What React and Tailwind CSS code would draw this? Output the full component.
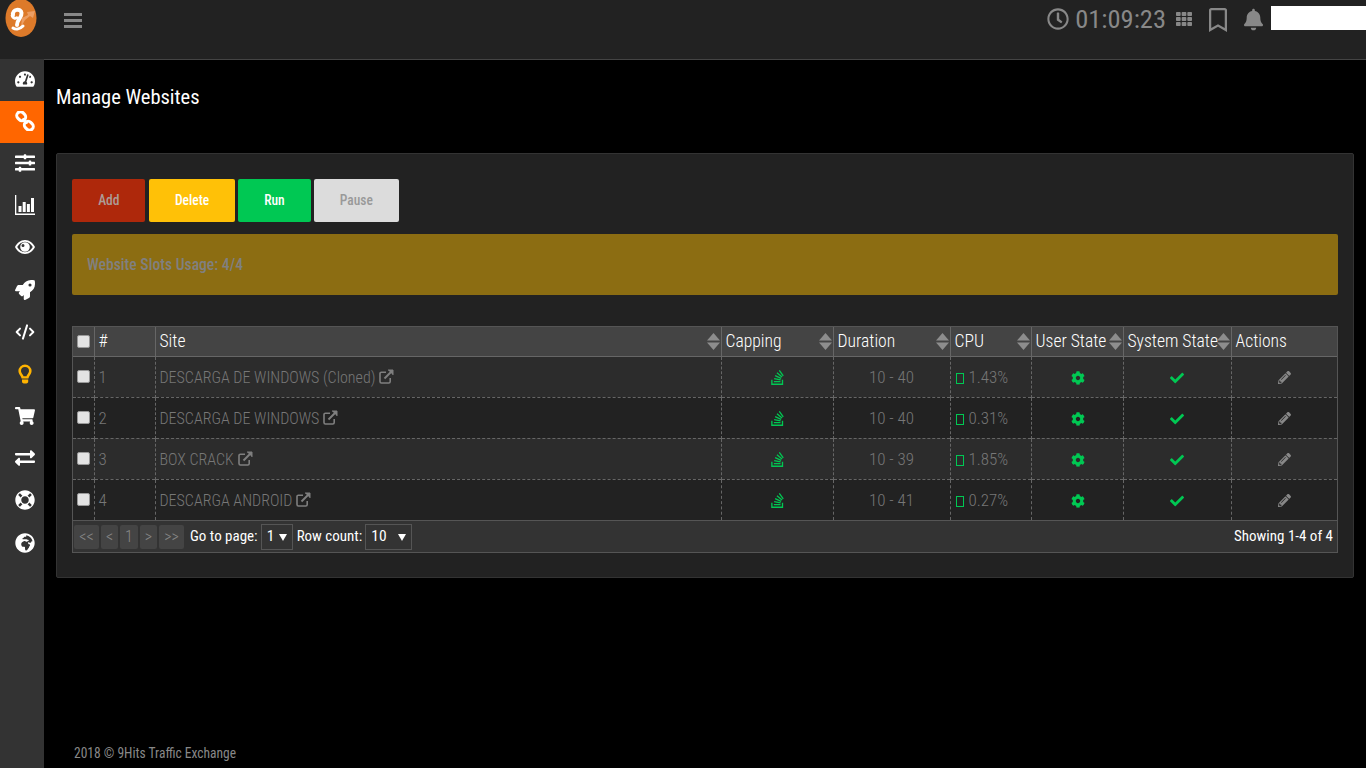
import React from "react";
import {
  FaTachometerAlt, FaSlidersH, FaRocket,
  FaShoppingCart, FaExchangeAlt, FaLifeRing, FaGlobeAfrica, FaRegClock, FaTh, FaRegBookmark, FaBell,
  FaStackOverflow, FaCog, FaCheck, FaPencilAlt,
} from "react-icons/fa";
import { CodeXml } from "lucide-react";

function ChainIcon({ className }) {
  return (
    <svg viewBox="0 0 20 20" fill="none" stroke="currentColor" strokeWidth="3" className={className}>
      <rect x="1.500" y="1.500" width="9.500" height="7.500" rx="3.700" transform="rotate(45 6.200 5.200)" />
      <rect x="9" y="11" width="9.500" height="7.500" rx="3.700" transform="rotate(45 13.800 14.800)" />
      <path d="M7.500 7.500l5 5" strokeWidth="2.400" />
    </svg>
  );
}

function BulbIcon({ className }) {
  return (
    <svg viewBox="0 0 20 20" className={className} fill="currentColor">
      <path fillRule="evenodd" d="M10 .5a6.600 6.600 0 0 0-6.600 6.600c0 2.400 1.500 3.700 2.400 5.300.5.8.7 1.600.8 2.200h6.800c.1-.6.3-1.400.8-2.200.9-1.600 2.400-2.900 2.400-5.300A6.600 6.600 0 0 0 10 .5Zm0 2.600a4 4 0 0 0-4 4c0 1.400.9 2.400 1.600 3.500.4.600.7 1.100.9 1.700h3c.2-.6.5-1.100.9-1.700.7-1.100 1.600-2.100 1.600-3.500a4 4 0 0 0-4-4Z" />
      <path d="M7 15.500h6.200v2.200c0 1-1 1.800-3.100 1.800S7 18.700 7 17.700Z" />
    </svg>
  );
}

function BarsIcon({ className }) {
  return (
    <svg viewBox="0 0 20 20" className={className} fill="currentColor">
      <path d="M0 0h1.300v18.500H20V20H0Z" />
      <path d="M3.500 11h3v6h-3ZM7.700 7h3v10h-3ZM11.900 9h3v8h-3ZM16 3h3v14h-3Z" />
    </svg>
  );
}

function EyeIcon({ className }) {
  return (
    <svg viewBox="0 0 20 20" className={className} fill="currentColor">
      <path fillRule="evenodd" d="M10 3C5.500 3 2 6.200 0 10c2 3.800 5.500 7 10 7s8-3.200 10-7c-2-3.800-5.500-7-10-7Zm0 1.800c3.400 0 6.100 2.300 7.800 5.200-1.700 2.900-4.400 5.200-7.800 5.200S3.900 12.900 2.200 10C3.900 7.100 6.600 4.800 10 4.800Z" />
      <path fillRule="evenodd" d="M10 5.200a4.800 4.800 0 1 0 0 9.600 4.800 4.800 0 0 0 0-9.600ZM8 7a1.500 1.500 0 1 1 0 3 1.500 1.500 0 0 1 0-3Z" />
    </svg>
  );
}

function CodeIcon({ className }) {
  return <CodeXml className={className} strokeWidth={2.4} />;
}

const nav = [
  [FaTachometerAlt, "text-white"], [ChainIcon, "text-white"], [FaSlidersH, "text-white"], [BarsIcon, "text-white"],
  [EyeIcon, "text-white"], [FaRocket, "text-white"], [CodeIcon, "text-white"], [BulbIcon, "text-[#ffb300]"],
  [FaShoppingCart, "text-white"], [FaExchangeAlt, "text-white"], [FaLifeRing, "text-white"], [FaGlobeAfrica, "text-white"],
];

const rows = [
  ["1", "DESCARGA DE WINDOWS (Cloned)", "10 - 40", "1.43%"],
  ["2", "DESCARGA DE WINDOWS", "10 - 40", "0.31%"],
  ["3", "BOX CRACK", "10 - 39", "1.85%"],
  ["4", "DESCARGA ANDROID", "10 - 41", "0.27%"],
];

function Logo() {
  return (
    <svg width="40" height="38" viewBox="0 0 40 38" className="block">
      <ellipse cx="21" cy="18" rx="15.500" ry="19" fill="#dd7a2a" />
      <path d="M21 27 L22 18 L28 15 L27 12 L35 11 L33 18 L30 16 L25 20 Z" fill="#eda26a" opacity="0.9" />
      <path d="M13 15 C12 9 21 8 21.500 13 C22 18 17 19 17 25" fill="none" stroke="#fff" strokeWidth="4" strokeLinecap="round" />
      <path d="M12 15 C13 19 16 19 18 17" fill="none" stroke="#fff" strokeWidth="3" />
      <path d="M13 28 C16 30 20 29 23 26" fill="none" stroke="#fff" strokeWidth="3" strokeLinecap="round" />
    </svg>
  );
}

function ExternalIcon() {
  return (
    <svg width="15" height="15" viewBox="0 0 15 15" fill="none" stroke="#7f7f7f" strokeWidth="1.600" className="mb-[4px] ml-[4px] inline-block align-middle">
      <path d="M7 3.200H2.400A1.400 1.400 0 0 0 1 4.600v8A1.400 1.400 0 0 0 2.400 14h7.400a1.400 1.400 0 0 0 1.400-1.400V9" />
      <path d="M5.500 9.500 13 2" strokeWidth="2" />
      <path d="M9 1h5v5" fill="#7f7f7f" strokeWidth="1" />
    </svg>
  );
}

function SortIcon() {
  return (
    <svg width="13" height="17" viewBox="0 0 13 17" fill="#8d8d8d" className="absolute right-[1px] top-[6px]">
      <path d="M6.500 0 13 7.500H0Z" />
      <path d="M6.500 17 13 9.500H0Z" />
    </svg>
  );
}

function Check() {
  return <span className="block h-[13px] w-[13px] rounded-[2px] border border-[#999] bg-[#e3e3e3]" />;
}

function Head({ children, sort }) {
  return (
    <th className="relative h-[29px] overflow-hidden whitespace-nowrap border-r border-[#666] px-[4px] py-0 text-left text-[17.600px] leading-[20px] font-[350] text-white last:border-r-0">
      {children}
      {sort && <SortIcon />}
    </th>
  );
}

function PageBtn({ children, w }) {
  return <span className={`flex h-[24px] items-center justify-center rounded-[2px] bg-[#444] text-[16px] font-light text-[#888] ${w}`}>{children}</span>;
}

function Select({ value, w }) {
  return (
    <span className={`flex h-[26px] items-center justify-between border border-[#555] pl-[5px] pr-[5px] text-[15.500px] text-white ${w}`}>
      {value}
      <svg width="8" height="8" viewBox="0 0 8 8" fill="#fff"><path d="M0 1h8L4 8Z" /></svg>
    </span>
  );
}

function ActionButton({ label, w, colors }) {
  return (
    <button className={`h-[43px] rounded-[2px] text-[15px] font-medium ${w} ${colors}`}>
      <span className="inline-block scale-x-90">{label}</span>
    </button>
  );
}

const cell = "border-r border-dashed border-[#666] pt-[2px]";

export default function App() {
  return (
    <div className="flex h-screen flex-col overflow-hidden bg-black font-['Roboto',sans-serif] [font-stretch:75%]">
      <header className="flex h-[60px] shrink-0 items-start border-b border-[#444] bg-[#222]">
        <div className="w-[44px] shrink-0"><Logo /></div>
        <div className="ml-[20px] mt-[13px] flex w-[18px] flex-col gap-[3.500px]">
          <span className="h-[2.500px] bg-[#888]" />
          <span className="h-[2.500px] bg-[#888]" />
          <span className="h-[2.500px] bg-[#888]" />
        </div>
        <div className="ml-auto flex items-start text-[#888]">
          <FaRegClock className="mt-[8px] h-[22px] w-[22px]" />
          <span className="ml-[6px] mt-[5px] text-[26.500px] leading-[28px]">01:09:23</span>
          <FaTh className="ml-[10px] mt-[11px] h-[16px] w-[16px]" />
          <FaRegBookmark className="ml-[17px] mt-[8px] h-[24px] w-[18px]" />
          <FaBell className="ml-[17px] mt-[7px] h-[25px] w-[19px]" />
          <span className="ml-[8px] mt-[6px] h-[24px] w-[95px] bg-white" />
        </div>
      </header>

      <div className="-mt-px flex min-h-0 flex-1">
        <nav className="w-[44px] shrink-0 bg-[#333]">
          {nav.map(([Icon, color], i) => (
            <div key={i} className={`flex h-[42.200px] w-full items-center justify-center pb-[3px] pl-[5px] ${i === 1 ? "bg-[#ff6600]" : ""} ${color}`}>
              <Icon className="h-[20px] w-[20px]" />
            </div>
          ))}
        </nav>

        <main className="flex min-w-0 flex-1 flex-col px-[12px]">
          <h1 className="mt-[26px] text-[20.500px] leading-[24px] font-normal text-white">Manage Websites</h1>

          <section className="mt-[44px] rounded-[2px] border border-[#333] bg-[#222] px-[15px] pb-[24px] pt-[25px]">
            <div className="flex gap-[3px]">
              <ActionButton label="Add" w="w-[73px]" colors="bg-[#ae280b] text-[#ad9c96]" />
              <span className="ml-[1px] flex"><ActionButton label="Delete" w="w-[86px]" colors="bg-[#ffc107] text-white" /></span>
              <ActionButton label="Run" w="w-[73px]" colors="bg-[#00c853] text-white" />
              <ActionButton label="Pause" w="w-[85px]" colors="bg-[#dcdcdc] text-[#999]" />
            </div>

            <div className="mt-[12px] flex h-[61px] items-center rounded-[2px] bg-[#8c6d12] px-[15px] text-[17px] font-medium text-[#808080]">
              <span className="inline-block origin-left scale-x-[.92]">Website Slots Usage: 4/4</span>
            </div>

            <div className="mt-[31px] border border-[#555]">
              <table className="w-full table-fixed border-collapse">
                <colgroup>
                  <col className="w-[21px]" />
                  <col className="w-[61px]" />
                  <col className="w-[566px]" />
                  <col className="w-[112px]" />
                  <col className="w-[117px]" />
                  <col className="w-[81px]" />
                  <col className="w-[92px]" />
                  <col className="w-[108px]" />
                  <col />
                </colgroup>
                <thead className="bg-[#444]">
                  <tr className="border-b border-[#666]">
                    <Head><Check /></Head>
                    <Head>#</Head>
                    <Head sort>Site</Head>
                    <Head sort>Capping</Head>
                    <Head sort>Duration</Head>
                    <Head sort>CPU</Head>
                    <Head sort>User State</Head>
                    <Head sort>System State</Head>
                    <Head>Actions</Head>
                  </tr>
                </thead>
                <tbody>
                  {rows.map((r, i) => (
                    <tr key={r[0]} className={`h-[41px] border-b border-dashed border-[#666] text-[17px] font-light text-[#777] last:border-b-0 ${i % 2 ? "bg-[#222]" : "bg-[#2c2c2c]"}`}>
                      <td className="border-r border-dashed border-[#666] px-[4px]"><Check /></td>
                      <td className={`${cell} px-[4px]`}>{r[0]}</td>
                      <td className={`${cell} whitespace-nowrap px-[4px] text-[16px]`}>{r[1]}<ExternalIcon /></td>
                      <td className={cell}><FaStackOverflow className="mx-auto h-[17px] w-[17px] text-[#00c853]" /></td>
                      <td className={`${cell} text-center`}>{r[2]}</td>
                      <td className={`${cell} whitespace-nowrap px-[5px]`}>
                        <span className="mr-[5px] inline-block h-[11px] w-[8px] border border-[#00c853] align-[-1px]" />{r[3]}
                      </td>
                      <td className={`${cell} pl-[2px]`}><FaCog className="mx-auto h-[14px] w-[14px] text-[#00c853]" /></td>
                      <td className={cell}><FaCheck className="mx-auto h-[14px] w-[14px] text-[#00c853]" /></td>
                      <td className="pt-[2px]"><FaPencilAlt className="mx-auto h-[13px] w-[13px] text-[#888]" /></td>
                    </tr>
                  ))}
                </tbody>
              </table>
              <div className="flex h-[32px] items-center border-t border-[#555] bg-[#333] pl-[1px] pr-[4px] text-[15px] text-white">
                <div className="flex gap-[2px]">
                  <PageBtn w="w-[25px]">&lt;&lt;</PageBtn>
                  <PageBtn w="w-[17px]">&lt;</PageBtn>
                  <PageBtn w="w-[18px]">1</PageBtn>
                  <PageBtn w="w-[17px]">&gt;</PageBtn>
                  <PageBtn w="w-[25px]">&gt;&gt;</PageBtn>
                </div>
                <span className="ml-[6px]">Go to page:</span>
                <span className="ml-[3px]"><Select value="1" w="w-[32px]" /></span>
                <span className="ml-[4px]">Row count:</span>
                <span className="ml-[3px]"><Select value="10" w="w-[47px]" /></span>
                <span className="ml-auto">Showing 1-4 of 4</span>
              </div>
            </div>
          </section>

          <footer className="mb-[6px] mt-auto pl-[18px] text-[15px] leading-[18px] text-[#888]">
            <span className="inline-block origin-left scale-x-90">2018 © 9Hits Traffic Exchange</span>
          </footer>
        </main>
      </div>
    </div>
  );
}
